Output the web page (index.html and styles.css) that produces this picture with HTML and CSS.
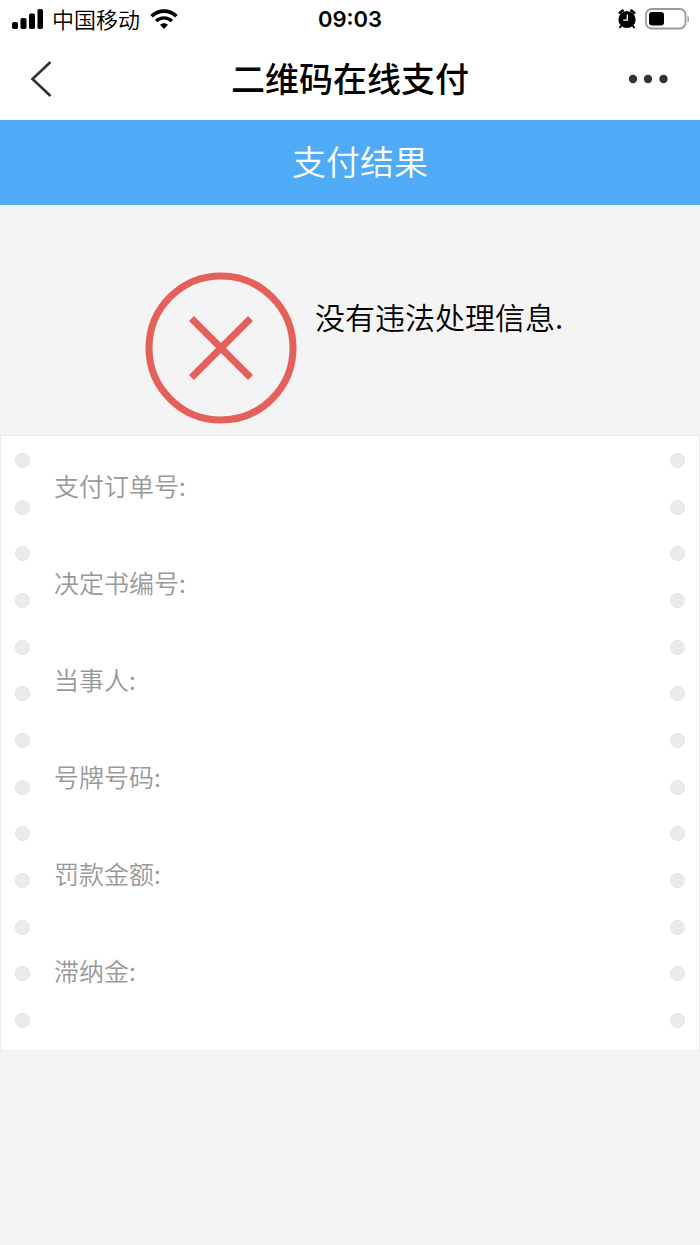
FILE: index.html
```html
<!DOCTYPE html>
<html lang="zh-CN">
<head>
<meta charset="utf-8">
<meta name="viewport" content="width=device-width, initial-scale=1">
<title>二维码在线支付</title>
<link rel="stylesheet" href="styles.css">
</head>
<body>
<div class="status">
  <div class="status-left">
    <svg class="signal" viewBox="0 0 32 20" aria-hidden="true">
      <rect x="0" y="13" width="6" height="7" rx="1.8"/>
      <rect x="8.5" y="9" width="6" height="11" rx="1.8"/>
      <rect x="17" y="4.500" width="6" height="15.500" rx="1.8"/>
      <rect x="25.500" y="0" width="5.500" height="20" rx="1.8"/>
    </svg>
    <span class="carrier">中国移动</span>
    <svg class="wifi" viewBox="0 0 28 20" aria-hidden="true">
      <path d="M1.600 7.300C8.600.4 19.400.4 26.400 7.300" fill="none" stroke="#000" stroke-width="3.600"/>
      <path d="M6.200 12.100c4.500-4.300 11.100-4.300 15.600 0" fill="none" stroke="#000" stroke-width="3.400"/>
      <path d="M14 20l-4-4.200c2.200-2.200 5.800-2.200 8 0z"/>
    </svg>
  </div>
  <time class="clock">09:03</time>
  <div class="status-right">
    <svg class="alarm" viewBox="0 0 20 20" aria-hidden="true">
      <circle cx="10" cy="10.500" r="8.600"/>
      <path d="M2.800 3.700l2.800-2.100M17.200 3.700l-2.800-2.100" stroke="#000" stroke-width="2.600" stroke-linecap="round"/>
      <path d="M4.400 16.500l-1.400 1.800M15.600 16.500l1.400 1.800" stroke="#000" stroke-width="2" stroke-linecap="round"/>
      <path d="M10.300 5.500v5.700H6.200" fill="none" stroke="#fff" stroke-width="1.300"/>
    </svg>
    <svg class="battery" viewBox="0 0 46 22" aria-hidden="true">
      <rect x="1" y="1" width="39.500" height="19.500" rx="5.500" fill="none" stroke="#999" stroke-width="1.800"/>
      <rect x="4" y="4" width="15" height="13.500" rx="3"/>
      <path d="M42.500 7.500c2 1 2 6 0 7z" fill="#999"/>
    </svg>
  </div>
</div>
<header class="nav">
  <button class="nav-button" type="button" aria-label="返回">
    <svg class="back" viewBox="0 0 22 36" aria-hidden="true"><path d="M20.500 1L2.500 18l18 17" fill="none" stroke="#333" stroke-width="2.600"/></svg>
  </button>
  <h1 class="title">二维码在线支付</h1>
  <button class="nav-button" type="button" aria-label="更多">
    <svg class="more" viewBox="0 0 42 10" aria-hidden="true"><circle cx="5" cy="5" r="4.200"/><circle cx="20" cy="5" r="4.200"/><circle cx="35.500" cy="5" r="4.200"/></svg>
  </button>
</header>
<main>
  <h2 class="banner">支付结果</h2>
  <section class="result">
    <svg class="fail" viewBox="0 0 152 152" aria-hidden="true"><circle cx="76" cy="76" r="72"/><path d="M46.500 46.500l59 59M105.500 46.500l-59 59"/></svg>
    <p class="message">没有违法处理信息.</p>
  </section>
  <section class="ticket">
    <div class="holes" aria-hidden="true"><i></i><i></i><i></i><i></i><i></i><i></i><i></i><i></i><i></i><i></i><i></i><i></i><i></i></div>
    <dl class="details">
      <dt>支付订单号:</dt>
      <dt>决定书编号:</dt>
      <dt>当事人:</dt>
      <dt>号牌号码:</dt>
      <dt>罚款金额:</dt>
      <dt>滞纳金:</dt>
    </dl>
    <div class="holes" aria-hidden="true"><i></i><i></i><i></i><i></i><i></i><i></i><i></i><i></i><i></i><i></i><i></i><i></i><i></i></div>
  </section>
</main>
</body>
</html>
```

FILE: styles.css
```css
* {
  box-sizing: border-box;
}

body {
  margin: 0;
  min-height: 100vh;
  background: #f4f4f4;
  color: #000;
  font-family: "Noto Sans CJK SC", sans-serif;
}

h1, h2, p, dl {
  margin: 0;
}

svg {
  display: block;
  flex: none;
}

.status {
  display: grid;
  grid-template-columns: 1fr auto 1fr;
  align-items: center;
  height: 38px;
  padding: 0 9px;
  background: #fff;
}

.status-left, .status-right {
  display: flex;
  align-items: center;
}

.status-left {
  gap: 8px;
  padding-left: 3px;
}

.status-right {
  justify-content: flex-end;
  gap: 8px;
}

.signal {
  width: 32px;
  height: 20px;
}

.carrier {
  padding-bottom: 2px;
  font-size: 22px;
  font-weight: 350;
  line-height: 32px;
}

.wifi {
  width: 28px;
  height: 20px;
  margin-left: 2px;
}

.clock {
  font-family: Inter, sans-serif;
  font-size: 22px;
  font-weight: 600;
  line-height: 32px;
}

.alarm {
  width: 20px;
  height: 20px;
}

.battery {
  width: 46px;
  height: 22px;
}

.nav {
  display: flex;
  align-items: center;
  justify-content: space-between;
  height: 82px;
  padding: 0 30px;
  background: #fff;
}

.nav-button {
  display: flex;
  align-items: center;
  width: 44px;
  height: 44px;
  padding: 0;
  border: 0;
  background: none;
}

.nav-button:last-child {
  justify-content: flex-end;
}

.back {
  width: 22px;
  height: 36px;
}

.more {
  width: 42px;
  height: 10px;
  fill: #333;
}

.title {
  padding-bottom: 2px;
  font-size: 34px;
  font-weight: 500;
  line-height: 48px;
}

.banner {
  padding: 0 0 3px 20px;
  background: #4faaf8;
  color: #fff;
  font-size: 34px;
  font-weight: 350;
  line-height: 82px;
  text-align: center;
}

.result {
  display: flex;
  justify-content: center;
  gap: 18px;
  padding: 67px 0 11px 8px;
}

.fail {
  width: 152px;
  height: 152px;
  fill: none;
  stroke: #e5605b;
  stroke-width: 7;
}

.message {
  padding-top: 22px;
  font-size: 30px;
  font-weight: 350;
  line-height: 44px;
}

.ticket {
  display: flex;
  min-height: 616px;
  padding: 0 14px;
  border: 1px solid #ebebeb;
  background: #fff;
}

.holes {
  display: flex;
  flex-direction: column;
  justify-content: space-between;
  padding: 17px 0 22px;
}

.holes i {
  width: 15px;
  height: 15px;
  border: 1px solid #e3e3e3;
  border-radius: 50%;
  background: #ebebeb;
}

.details {
  display: grid;
  flex: 1;
  align-content: start;
  gap: 61px;
  padding: 31px 24px;
  color: #999;
  font-size: 25px;
  font-weight: 350;
  line-height: 36px;
}
```
